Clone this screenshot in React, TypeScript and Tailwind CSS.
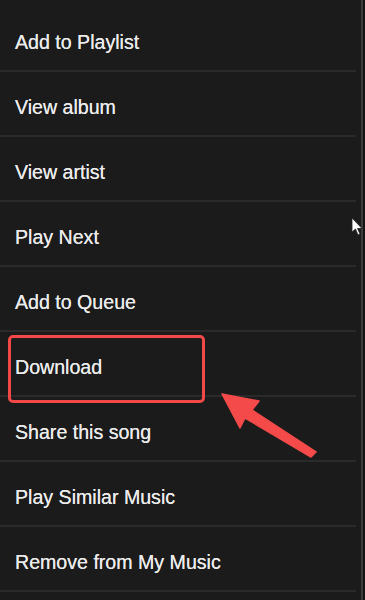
import React from "react";

const items = [
  "Add to Playlist",
  "View album",
  "View artist",
  "Play Next",
  "Add to Queue",
  "Download",
  "Share this song",
  "Play Similar Music",
  "Remove from My Music",
];

export default function App() {
  return (
    <div
      className="relative w-[365px] h-[600px] overflow-hidden bg-[#1b1b1b] flex"
      style={{ fontFamily: '"Liberation Sans", Arial, sans-serif' }}
    >
      <div className="w-[356px] pt-[7px] flex flex-col">
        {items.map((t) => (
          <div
            key={t}
            className="h-[65px] shrink-0 border-b-2 border-[#2a2a2a] flex items-center pt-[8px] pl-[15px] text-[19.6px] text-[#ebebeb] leading-none [text-shadow:0_0_0.6px_#ebebeb]"
          >
            {t}
          </div>
        ))}
      </div>
      <div className="w-[5px]" />
      <div className="w-[2px] bg-[#3c3c3c]" />
      <div className="flex-1 bg-[#141414]" />

      {/* highlight box */}
      <div className="absolute left-[8px] top-[335px] w-[197px] h-[68px] border-[3px] border-[#f24848] rounded-[5px]" />

      {/* arrow */}
      <svg className="absolute left-0 top-0" width="365" height="600" viewBox="0 0 365 600">
        <polygon
          points="222,394 259,401 252,410 316,452 311,457 245,418 240,428"
          fill="#f44a4a"
          stroke="#f44a4a"
          strokeWidth="1.5"
          strokeLinejoin="round"
        />
        {/* mouse cursor */}
        <path
          d="M352,218 L352,232 L355.5,229 L358,235 L360,234 L357.5,228.5 L362,228.5 Z"
          fill="#ffffff"
          stroke="#222"
          strokeWidth="0.8"
        />
      </svg>
    </div>
  );
}
